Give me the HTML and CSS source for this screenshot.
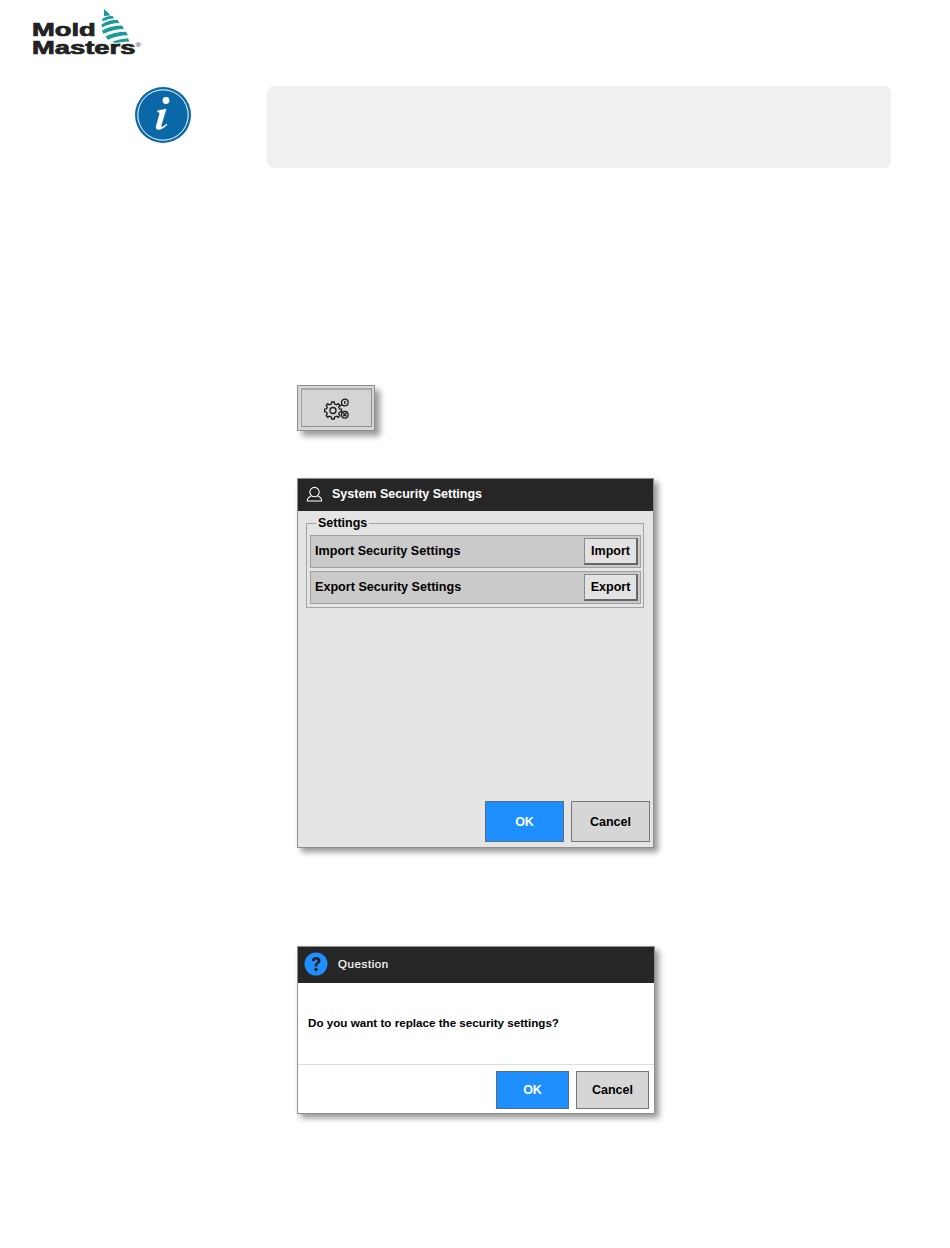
FILE: index.html
```html
<!DOCTYPE html>
<html lang="en">
<head>
<meta charset="utf-8">
<title>System Security Settings</title>
<link rel="stylesheet" href="styles.css">
</head>
<body>
<header class="logo">
  <div class="logo-words"><span>Mold</span><span>Masters<sup class="reg">®</sup></span></div>
  <svg class="logo-mark" width="30" height="34" viewBox="0 0 30 34">
    <g fill="#1b9a9c">
      <path d="M4 0 L9.500 5 L10 6.500 L4 7 Z"/>
      <path d="M2.500 9.500 Q7 6.800 12.500 6.800 L14 9.200 Q8 9.400 2.500 12.500 Z"/>
      <path d="M1.500 15.500 Q8 11 17.500 10.800 L19.300 14 Q10 14.200 2 18.500 Z"/>
      <path d="M2 21.500 Q11 16.500 22 16.500 L24 20 Q13 20 3.500 24.800 Z"/>
      <path d="M5.500 27.500 Q14 23 26 22.800 L28 26.300 Q17 26.500 8 30.800 Z"/>
      <path d="M12 32.800 Q19 29.800 28 29.300 L29.500 32.500 Q22 32.500 16 34 Z"/>
    </g>
  </svg>
</header>

<section class="note">
  <div class="note-icon-col">
    <svg width="58" height="58" viewBox="0 0 58 58">
      <circle cx="29" cy="29" r="28" fill="#0a68a8"/>
      <circle cx="29" cy="29" r="25.200" fill="none" stroke="#fff" stroke-width="1"/>
      <circle cx="32" cy="14.500" r="3.400" fill="#fff"/>
      <path d="M23.500 24.500 L32.500 22.800 L27.500 39 Q27 41.500 29 40.500 L32.500 37.800 L33.300 38.800 Q28.500 43.800 24.500 43.800 Q21 43.800 22 40 L25.500 27.500 Q25.800 26 23.300 26 Z" fill="#fff"/>
    </svg>
  </div>
  <div class="note-box"></div>
</section>

<main class="steps">
  <div class="tool-button">
    <div class="tool-button-inner">
      <svg class="tool-icon" width="26" height="22" viewBox="0 0 26 22" fill="none" stroke="#1c1c1c" stroke-width="1.300">
        <path d="M7.800 4 L10.200 4 L10.700 6 L12.500 6.800 L14.200 5.700 L15.800 7.300 L14.700 9 L15.500 10.800 L17.500 11.300 L17.500 13.700 L15.500 14.200 L14.700 16 L15.800 17.700 L14.200 19.300 L12.500 18.200 L10.700 19 L10.200 21 L7.800 21 L7.300 19 L5.500 18.200 L3.800 19.300 L2.200 17.700 L3.300 16 L2.500 14.200 L0.500 13.700 L0.500 11.300 L2.500 10.800 L3.300 9 L2.200 7.300 L3.800 5.700 L5.500 6.800 L7.300 6 Z"/>
        <circle cx="9" cy="12.500" r="3"/>
        <circle cx="20.800" cy="4.500" r="3.300"/>
        <circle cx="20.800" cy="16.800" r="3.300"/>
        <path d="M20.800 3 V6 M19.300 15.300 L22.300 18.300 M22.300 15.300 L19.300 18.300 M15.500 8.500 L18 6.500 M17 15.800 L17.800 16.200"/>
      </svg>
    </div>
  </div>

  <div class="dialog settings-dialog">
    <div class="title-bar settings-title">
      <svg width="17" height="16" viewBox="0 0 18 16" fill="none" stroke="#fff" stroke-width="1.100">
        <circle cx="9" cy="6" r="5"/>
        <path d="M5.500 10 L2.500 12 Q1 13.500 1.500 15.500 L16.500 15.500 Q17 13.500 15.500 12 L12.500 10"/>
      </svg>
      <span>System Security Settings</span>
    </div>
    <div class="settings-body">
      <fieldset class="group">
        <legend>Settings</legend>
        <div class="group-row">
          <span class="row-label">Import Security Settings</span>
          <button class="raised" type="button">Import</button>
        </div>
        <div class="group-row">
          <span class="row-label">Export Security Settings</span>
          <button class="raised" type="button">Export</button>
        </div>
      </fieldset>
      <div class="settings-actions">
        <button class="btn btn-ok btn-lg" type="button">OK</button>
        <button class="btn btn-cancel btn-lg" type="button">Cancel</button>
      </div>
    </div>
  </div>

  <div class="dialog question-dialog">
    <div class="title-bar question-title">
      <svg width="24" height="24" viewBox="0 0 24 24">
        <circle cx="12" cy="12" r="11.500" fill="#1e8fff"/>
        <path d="M7.800 9 Q8 5 12.200 5 Q16.500 5 16.500 8.600 Q16.500 10.800 14.200 12 Q13.200 12.700 13.200 14.500 L10.500 14.500 Q10.400 11.700 12.300 10.500 Q13.600 9.700 13.600 8.700 Q13.600 7.500 12.100 7.500 Q10.700 7.500 10.500 9.300 Z" fill="#222"/>
        <circle cx="11.900" cy="17.500" r="1.800" fill="#222"/>
      </svg>
      <span>Question</span>
    </div>
    <p class="question-text">Do you want to replace the security settings?</p>
    <div class="question-actions">
      <button class="btn btn-ok btn-sm" type="button">OK</button>
      <button class="btn btn-cancel btn-sm" type="button">Cancel</button>
    </div>
  </div>
</main>
</body>
</html>
```

FILE: styles.css
```css
* { box-sizing: border-box; }

html, body { margin: 0; padding: 0; }

body {
  width: 950px;
  height: 1248px;
  background: #fff;
  overflow: hidden;
  font-family: "Liberation Sans", Arial, sans-serif;
  color: #000;
}

.logo {
  height: 86px;
  padding: 9px 0 0 32px;
  position: relative;
}

.logo-words {
  display: flex;
  flex-direction: column;
  width: 80px;
  margin-top: 13px;
  font-size: 18px;
  font-weight: 700;
  line-height: 17.500px;
  color: #222;
  -webkit-text-stroke: 0.7px #222;
  transform: scaleX(1.52);
  transform-origin: left top;
  white-space: nowrap;
}

.reg {
  font-size: 5px;
  line-height: 0;
  font-weight: 400;
  -webkit-text-stroke: 0;
}

.logo-mark {
  position: absolute;
  left: 100px;
  top: 9px;
}

.note {
  display: flex;
  height: 82px;
}

.note-icon-col {
  width: 267px;
  padding-left: 134px;
}

.note-box {
  width: 624px;
  height: 82px;
  background: #f0f0f0;
  border-radius: 7px;
}

.steps {
  display: flex;
  flex-direction: column;
  padding: 217px 0 0 297px;
}

.tool-button {
  width: 78px;
  height: 46px;
  padding: 2px 2px 3px 3px;
  background: #d6d6d6;
  border: 1px solid #8e8e8e;
  box-shadow: 5px 5px 6px rgba(0, 0, 0, 0.4);
}

.tool-button-inner {
  height: 100%;
  display: flex;
  align-items: center;
  justify-content: center;
  border: 1px solid #8f8f8f;
  border-top: 2px solid #a8a8a8;
  border-left-color: #a0a0a0;
  background: #d4d4d4;
}

.tool-icon {
  margin-top: 1px;
}

.dialog {
  display: flex;
  flex-direction: column;
  border: 1px solid #8e8e8e;
  box-shadow: 4px 4px 6px rgba(0, 0, 0, 0.42);
}

.settings-dialog {
  width: 357px;
  height: 370px;
  margin-top: 47px;
  background: #e4e4e4;
}

.title-bar {
  display: flex;
  align-items: center;
  background: #262626;
  color: #fff;
  font-weight: 700;
  flex: none;
}

.settings-title {
  height: 32px;
  padding: 0 0 2px 8px;
  gap: 9px;
  font-size: 12.500px;
}

.settings-body {
  flex: 1;
  display: flex;
  flex-direction: column;
  padding: 6px 3px 5px 8px;
}

.group {
  margin: 0 6px 0 0;
  padding: 5px 2px 2px 3px;
  height: 91px;
  border: 1px solid #a4a4a4;
  min-inline-size: 0;
}

.group legend {
  padding: 0 2px;
  margin-left: 6px;
  font-size: 12.500px;
  font-weight: 700;
  line-height: 13px;
}

.group-row {
  display: flex;
  align-items: center;
  justify-content: space-between;
  height: 33px;
  margin-bottom: 3px;
  padding: 0 2px 0 4px;
  background: #cacaca;
  border: 1px solid #a0a0a0;
  font-size: 12.600px;
  font-weight: 700;
}

.row-label {
  margin-bottom: 2px;
}

.raised {
  width: 54px;
  height: 27px;
  padding: 0;
  background: #e2e2e2;
  border: 1px solid #8a8a8a;
  border-right: 2px solid #666;
  border-bottom: 2px solid #666;
  font: 700 12.500px "Liberation Sans", Arial, sans-serif;
  color: #000;
}

.settings-actions {
  display: flex;
  justify-content: flex-end;
  gap: 7px;
  margin-top: auto;
}

.btn {
  padding: 0;
  font-family: "Liberation Sans", Arial, sans-serif;
  font-weight: 700;
  border: 1px solid #5f6b75;
}

.btn-ok { background: #1e8fff; color: #fff; }

.btn-cancel { background: #d6d6d6; color: #000; border-color: #777; }

.btn-lg {
  width: 79px;
  height: 41px;
  font-size: 12.500px;
}

.btn-sm {
  width: 73px;
  height: 38px;
  font-size: 12.500px;
}

.question-dialog {
  width: 358px;
  height: 168px;
  margin-top: 98px;
  background: #fff;
}

.question-title {
  height: 36px;
  padding: 0 0 2px 6px;
  gap: 10px;
  font-size: 11.500px;
  font-weight: 400;
  letter-spacing: 0.6px;
  -webkit-text-stroke: 0.2px #fff;
}

.question-text {
  flex: 1;
  display: flex;
  align-items: center;
  margin: 0;
  padding: 0 10px 2px;
  font-size: 11.650px;
  font-weight: 700;
  border-bottom: 1px solid #dcdcdc;
}

.question-actions {
  display: flex;
  justify-content: flex-end;
  flex: none;
  gap: 7px;
  height: 48px;
  padding: 6px 5px 0 0;
}
```
